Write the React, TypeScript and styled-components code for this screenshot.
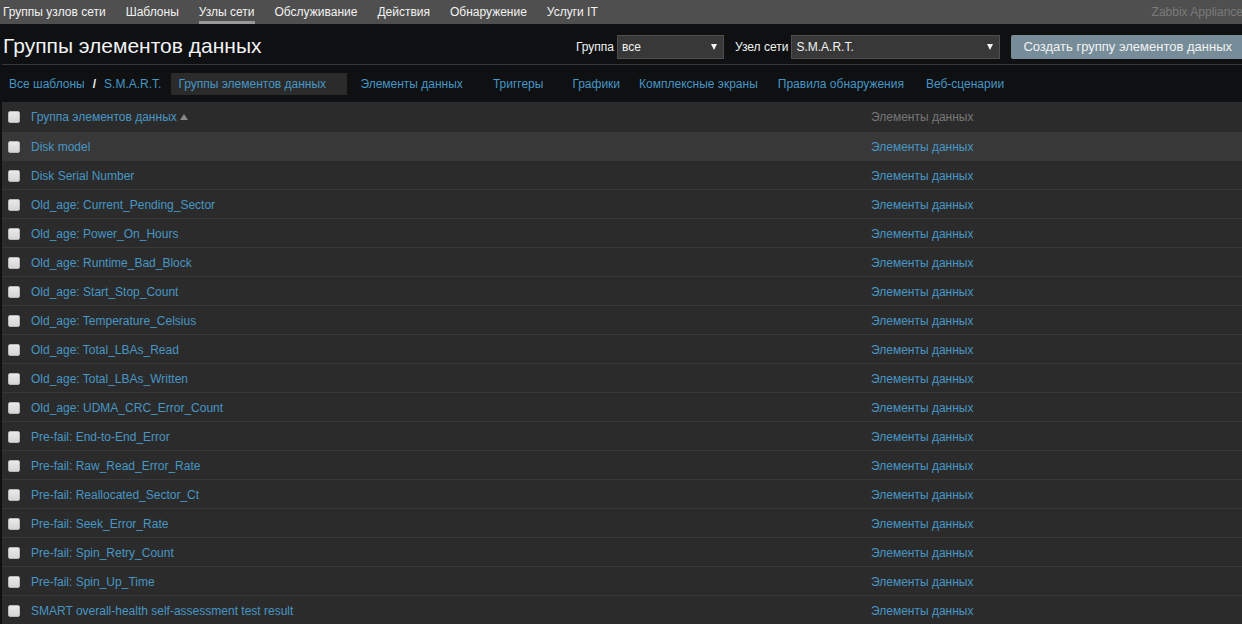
import React from "react";
import styled, { createGlobalStyle } from "styled-components";

const Global = createGlobalStyle`
  html, body { margin: 0; padding: 0; background: #0e1012; overflow: hidden; }
  body { font-family: "Liberation Sans", Arial, sans-serif; font-size: 12px; color: #f2f2f2; }
  * { box-sizing: border-box; }
`;

const Page = styled.div`
  width: 1244px;
  min-height: 624px;
  background: #0e1012;
`;

const TopNav = styled.nav`
  height: 24px;
  background: #4f4f4f;
  display: flex;
  align-items: stretch;
  padding-left: 3px;
`;

const NavItem = styled.a<{ $active?: boolean }>`
  display: flex;
  align-items: center;
  margin-right: 20px;
  color: #f2f2f2;
  text-decoration: none;
  font-size: 12px;
  border-bottom: 3px solid ${(p) => (p.$active ? "#9a9a9a" : "transparent")};
  padding-top: 3px;
  white-space: nowrap;
`;

const Brand = styled.span`
  margin-left: auto;
  margin-right: 1px;
  display: flex;
  align-items: center;
  color: #7a7a7a;
  font-size: 12px;
  white-space: nowrap;
`;

const Header = styled.header`
  height: 41px;
  margin-left: 2px;
  display: flex;
  align-items: center;
  border-bottom: 1px solid #383838;
  padding-left: 1px;
`;

const Title = styled.h1`
  margin: 0;
  font-size: 21px;
  font-weight: normal;
  color: #f2f2f2;
  padding-top: 4px;
`;

const Controls = styled.div`
  margin-left: auto;
  display: flex;
  align-items: center;
  padding-top: 5px;
`;

const Label = styled.span`
  color: #f2f2f2;
  font-size: 12px;
  margin-right: 3px;
`;

const Select = styled.div<{ $w: number }>`
  width: ${(p) => p.$w}px;
  height: 24px;
  background: #383838;
  border: 1px solid #4f4f4f;
  display: flex;
  align-items: center;
  padding: 0 6px 0 4px;
  margin-right: 11px;
  color: #f2f2f2;
  font-size: 12px;
`;

const Arrow = styled.span`
  margin-left: auto;
  width: 0;
  height: 0;
  border-left: 3.5px solid transparent;
  border-right: 3.5px solid transparent;
  border-top: 6px solid #f2f2f2;
`;

const Button = styled.button`
  height: 24px;
  background: #768d99;
  border: none;
  border-radius: 2px;
  color: #f2f2f2;
  font-family: "Liberation Sans", Arial, sans-serif;
  font-size: 13px;
  padding: 0 12px;
  white-space: nowrap;
`;

const Tabs = styled.div`
  height: 37px;
  display: flex;
  align-items: center;
  padding-left: 9px;
`;

const Crumb = styled.a`
  color: #4796c4;
  text-decoration: none;
  white-space: nowrap;
`;

const Sep = styled.span`
  color: #f2f2f2;
  font-weight: bold;
  margin: 0 8px 0 8px;
`;

const Tab = styled.a<{ $active?: boolean; $ml: number }>`
  margin-left: ${(p) => p.$ml}px;
  color: #4796c4;
  text-decoration: none;
  white-space: nowrap;
  height: 22px;
  display: flex;
  align-items: center;
  padding: 0 ${(p) => (p.$active ? "7px" : "0")};
  width: ${(p) => (p.$active ? "176px" : "auto")};
  background: ${(p) => (p.$active ? "#2b2b2b" : "transparent")};
`;

const Table = styled.div`
  margin-left: 2px;
  background: #2b2b2b;
`;

const Row = styled.div<{ $head?: boolean; $hover?: boolean }>`
  display: grid;
  grid-template-columns: 29px 840px 1fr;
  align-items: center;
  height: 29px;
  padding-top: 1px;
  border-bottom: 1px solid #383838;
  background: ${(p) => (p.$hover ? "#383838" : "#2b2b2b")};
  ${(p) => (p.$head ? "height: 30px; padding-top: 0; border-bottom: none;" : "")}
`;

const Check = styled.span`
  display: block;
  width: 12px;
  height: 12px;
  margin-left: 6px;
  background: linear-gradient(#e9e9e9, #d6d6d6);
  border: 1px solid #b9b9b9;
  border-radius: 2px;
`;

const Link = styled.a<{ $muted?: boolean }>`
  color: ${(p) => (p.$muted ? "#767676" : "#4796c4")};
  text-decoration: none;
  white-space: nowrap;
  display: flex;
  align-items: center;
`;

const SortUp = styled.span`
  display: inline-block;
  margin-left: 3px;
  width: 0;
  height: 0;
  border-left: 4px solid transparent;
  border-right: 4px solid transparent;
  border-bottom: 6px solid #8a8a8a;
`;

const navItems = [
  "Группы узлов сети",
  "Шаблоны",
  "Узлы сети",
  "Обслуживание",
  "Действия",
  "Обнаружение",
  "Услуги IT",
];

const tabs: { label: string; ml: number; active?: boolean }[] = [
  { label: "Группы элементов данных", ml: 10, active: true },
  { label: "Элементы данных", ml: 13 },
  { label: "Триггеры", ml: 30 },
  { label: "Графики", ml: 29 },
  { label: "Комплексные экраны", ml: 19 },
  { label: "Правила обнаружения", ml: 20 },
  { label: "Веб-сценарии", ml: 22 },
];

const rows = [
  "Disk model",
  "Disk Serial Number",
  "Old_age: Current_Pending_Sector",
  "Old_age: Power_On_Hours",
  "Old_age: Runtime_Bad_Block",
  "Old_age: Start_Stop_Count",
  "Old_age: Temperature_Celsius",
  "Old_age: Total_LBAs_Read",
  "Old_age: Total_LBAs_Written",
  "Old_age: UDMA_CRC_Error_Count",
  "Pre-fail: End-to-End_Error",
  "Pre-fail: Raw_Read_Error_Rate",
  "Pre-fail: Reallocated_Sector_Ct",
  "Pre-fail: Seek_Error_Rate",
  "Pre-fail: Spin_Retry_Count",
  "Pre-fail: Spin_Up_Time",
  "SMART overall-health self-assessment test result",
];

export default function App() {
  return (
    <Page>
      <Global />
      <TopNav>
        {navItems.map((n) => (
          <NavItem key={n} $active={n === "Узлы сети"}>
            {n}
          </NavItem>
        ))}
        <Brand>Zabbix Appliance</Brand>
      </TopNav>
      <Header>
        <Title>Группы элементов данных</Title>
        <Controls>
          <Label>Группа</Label>
          <Select $w={107}>
            все
            <Arrow />
          </Select>
          <Label>Узел сети</Label>
          <Select $w={209}>
            S.M.A.R.T.
            <Arrow />
          </Select>
          <Button>Создать группу элементов данных</Button>
        </Controls>
      </Header>
      <Tabs>
        <Crumb>Все шаблоны</Crumb>
        <Sep>/</Sep>
        <Crumb>S.M.A.R.T.</Crumb>
        {tabs.map((t) => (
          <Tab key={t.label} $ml={t.ml} $active={t.active}>
            {t.label}
          </Tab>
        ))}
      </Tabs>
      <Table>
        <Row $head>
          <Check />
          <Link>
            Группа элементов данных
            <SortUp />
          </Link>
          <Link $muted>Элементы данных</Link>
        </Row>
        {rows.map((r, i) => (
          <Row key={r} $hover={i === 0}>
            <Check />
            <Link>{r}</Link>
            <Link>Элементы данных</Link>
          </Row>
        ))}
      </Table>
    </Page>
  );
}
